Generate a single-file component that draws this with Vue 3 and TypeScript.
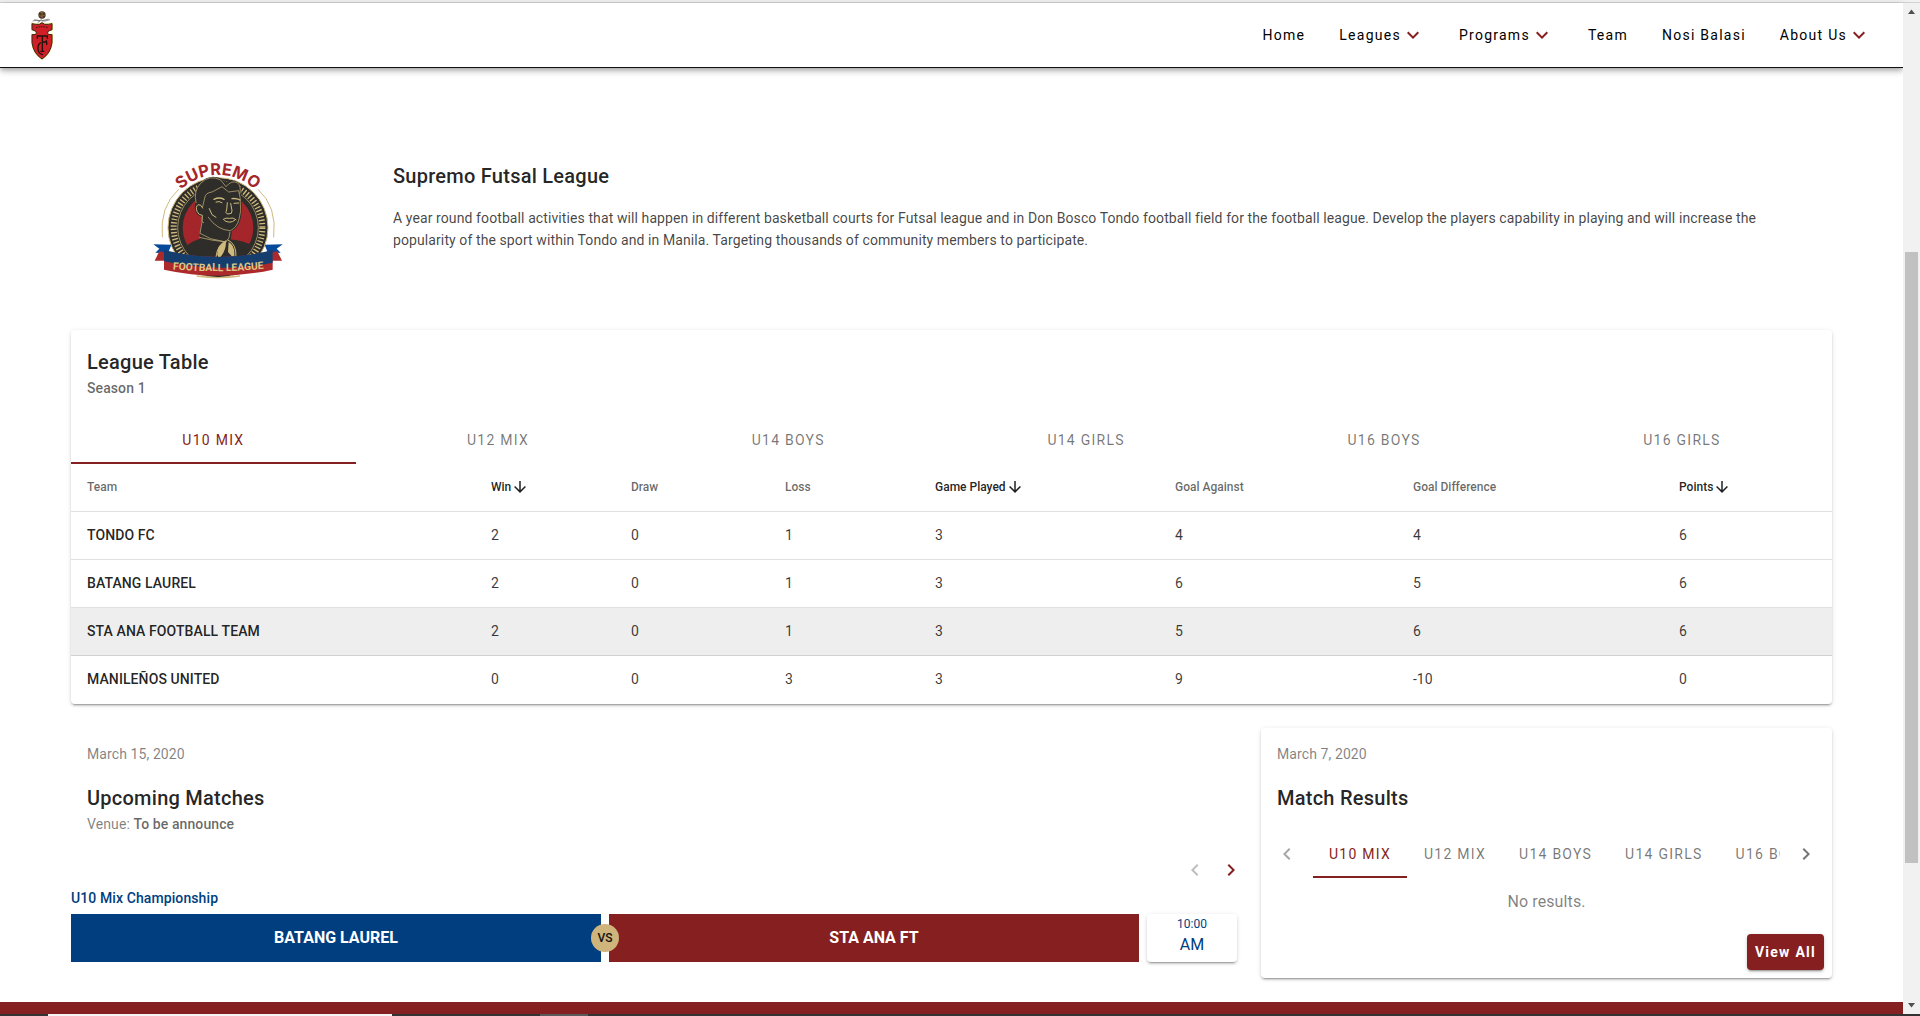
<script setup lang="ts">
import { ref } from 'vue'

interface NavItem {
  label: string
  menu: boolean
}

interface Column {
  key: keyof Standing
  label: string
  sorted: boolean
  share: number
}

interface Standing {
  team: string
  win: number
  draw: number
  loss: number
  played: number
  against: number
  difference: number
  points: number
}

const nav: NavItem[] = [
  { label: 'Home', menu: false },
  { label: 'Leagues', menu: true },
  { label: 'Programs', menu: true },
  { label: 'Team', menu: false },
  { label: 'Nosi Balasi', menu: false },
  { label: 'About Us', menu: true },
]

const divisions: string[] = ['U10 MIX', 'U12 MIX', 'U14 BOYS', 'U14 GIRLS', 'U16 BOYS', 'U16 GIRLS']

const columns: Column[] = [
  { key: 'team', label: 'Team', sorted: false, share: 404 },
  { key: 'win', label: 'Win', sorted: true, share: 140 },
  { key: 'draw', label: 'Draw', sorted: false, share: 154 },
  { key: 'loss', label: 'Loss', sorted: false, share: 150 },
  { key: 'played', label: 'Game Played', sorted: true, share: 240 },
  { key: 'against', label: 'Goal Against', sorted: false, share: 238 },
  { key: 'difference', label: 'Goal Difference', sorted: false, share: 266 },
  { key: 'points', label: 'Points', sorted: true, share: 169 },
]

const standings: Standing[] = [
  { team: 'TONDO FC', win: 2, draw: 0, loss: 1, played: 3, against: 4, difference: 4, points: 6 },
  { team: 'BATANG LAUREL', win: 2, draw: 0, loss: 1, played: 3, against: 6, difference: 5, points: 6 },
  { team: 'STA ANA FOOTBALL TEAM', win: 2, draw: 0, loss: 1, played: 3, against: 5, difference: 6, points: 6 },
  { team: 'MANILEÑOS UNITED', win: 0, draw: 0, loss: 3, played: 3, against: 9, difference: -10, points: 0 },
]

const tableTab = ref<number>(0)
const resultTab = ref<number>(0)
const activeRow = ref<number>(2)
</script>

<template>
  <div class="window">
    <div class="edge-top"></div>
    <div class="view">
      <div class="page">
        <header class="bar">
          <a href="#" class="brand" aria-label="Tondo FC">
            <svg width="24" height="50" viewBox="0 0 72 150">
              <circle cx="36" cy="15" r="11" fill="#4a3520" />
              <path d="M29 8q7-5 12 0M27 17q9 5 18-2M36 5v19" stroke="#a07c4b" stroke-width="2" fill="none" />
              <path d="M8 33q12-5 24-1t28-3M13 29l16 5M24 38l12-12M36 32l20-5" stroke="#555" stroke-width="2" fill="none" />
              <path d="M36 38l8 5q12 1 22-2v18q-15 3-14 11 3 5 14 4v24q-4 32-30 49Q10 130 6 98V74q11 1 14-4 1-8-14-11V41q10 3 22 2z" fill="#d01f27" stroke="#e9dc7a" stroke-width="5" />
              <path d="M36 38l8 5q12 1 22-2v18q-15 3-14 11 3 5 14 4v24q-4 32-30 49Q10 130 6 98V74q11 1 14-4 1-8-14-11V41q10 3 22 2z" fill="#d01f27" stroke="#3b2a16" stroke-width="3" />
              <path d="M18 53q18-6 36 0" stroke="#5a1414" stroke-width="4" stroke-dasharray="3 2" fill="none" />
              <path d="M22 86v-8h30v8M37 78v46M31 124h12M37 96h13v9M49 96v-5M33 98q-10 4-9 19t15 17" stroke="#25120d" stroke-width="4" fill="none" />
            </svg>
          </a>
          <nav class="nav" aria-label="Main">
            <a v-for="item in nav" :key="item.label" href="#" class="nav-link">
              {{ item.label }}
              <svg v-if="item.menu" class="chevron" width="24" height="24" viewBox="0 0 24 24">
                <path d="M7.41 8.58L12 13.17l4.59-4.59L18 10l-6 6-6-6z" />
              </svg>
            </a>
          </nav>
        </header>

        <main class="content">
          <section class="intro">
            <div class="crest">
              <svg width="144" height="124" viewBox="36 30 432 372" role="img" aria-label="Supremo Football League">
                <defs>
                  <path id="arc-top" d="M72 237a162 162 0 0 1 324 0" />
                  <path id="arc-ribbon" d="M84 357Q235 371 386 355" />
                  <clipPath id="disc"><circle cx="234" cy="233" r="108" /></clipPath>
                </defs>
                <path d="M116 118Q58 170 67 262M354 118Q412 170 401 262" stroke="#cfba7d" stroke-width="3" fill="none" />
                <circle cx="234" cy="233" r="150" fill="#2f2d2a" stroke="#cfba7d" stroke-width="3" />
                <circle cx="234" cy="233" r="133" fill="none" stroke="#cfba7d" stroke-width="18" stroke-dasharray="4 6" />
                <circle cx="234" cy="233" r="121" fill="none" stroke="#cfba7d" stroke-width="2" />
                <circle cx="234" cy="233" r="106" fill="#a4262a" />
                <path clip-path="url(#disc)" d="M110 345Q120 284 180 266l50 8 34-6q66 2 96 40v60H110z" fill="#2f2d2a" />
                <path d="M168 160q-8-36 14-60 26-28 62-12l12 12q20-14 38 0 12 14 7 34l3 46-4 26q-6 26-26 36l-4 28-34 16q-34-4-56-24l8-62q-18-4-21-24-2-10 1-16z" fill="#2f2d2a" stroke="#2f2d2a" stroke-width="4" />
                <g fill="none" stroke="#cfba7d" stroke-linecap="round" stroke-linejoin="round">
                  <path stroke-width="2" d="M168 158q-8-36 14-58 26-28 60-10l16 20q16-20 34-12 12 10 8 32" />
                  <path stroke-width="2" d="M188 170l6-26q2-16 22-18l30-16 20 16 30-4 4 20 2 40-5 26q-6 24-26 34-40-2-66-40" />
                  <path stroke-width="3" d="M188 174q-4-12-14-10-8 6-3 20 5 12 16 12l-1 18 4 4" />
                  <path stroke-width="4" d="M222 148q16-8 30 0M276 146q12-2 24 4" />
                  <path stroke-width="3" d="M228 156q10-4 18 2M282 160l14-1M262 158l-2 22q-6 10 4 12l10-2 2-8-4-22" />
                  <path stroke-width="3" d="M250 208q8-6 18-3 12-4 20 4M254 212q16 10 30-1M208 176l8 18 12 8" />
                  <path stroke-width="2" d="M186 216l-6 34 32 16 46 10q12-10 12-30M178 262q36 10 80 14" />
                  <path stroke-width="3" d="M258 272q-26 12-30 48M264 270q26 12 24 50" />
                </g>
                <path d="M232 316q-2-32 26-42 0 32-20 50zM266 276q22 12 16 50l-18-20z" fill="#cfba7d" />
                <path d="M40 283l54 1-10 26-38-2 12-12zM428 283l-54 1 10 26 38-2-12-12z" fill="#06489a" />
                <path d="M58 304l28 6v22H44zM412 304l-28 6v22h42z" fill="#ad2a2c" />
                <path d="M72 302Q235 340 398 302v57Q235 395 72 359z" fill="#ad2a2c" />
                <path d="M72 300Q235 342 398 300v38Q235 370 72 334z" fill="#153e6e" />
                <path d="M170 378q64 10 130 0" stroke="#cfba7d" stroke-width="4" fill="none" />
                <text class="crest-top"><textPath href="#arc-top" startOffset="50%" text-anchor="middle">SUPREMO</textPath></text>
                <text class="crest-ribbon"><textPath href="#arc-ribbon" startOffset="50%" text-anchor="middle">FOOTBALL LEAGUE</textPath></text>
              </svg>
            </div>
            <div class="intro-text">
              <h1 class="title">Supremo Futsal League</h1>
              <p class="lead">
                A year round football activities that will happen in different basketball courts for Futsal league and in Don Bosco Tondo football field for the football league. Develop the players capability in playing and will increase the popularity of the sport within Tondo and in Manila. Targeting thousands of community members to participate.
              </p>
            </div>
          </section>

          <section class="card">
            <div class="card-head">
              <h2 class="title">League Table</h2>
              <p class="subtitle strong">Season 1</p>
            </div>
            <div class="tabs" role="tablist">
              <button
                v-for="(name, i) in divisions"
                :key="name"
                type="button"
                role="tab"
                class="tab grow"
                :class="{ active: tableTab === i }"
                @click="tableTab = i"
              >{{ name }}</button>
            </div>
            <table class="standings">
              <colgroup>
                <col v-for="col in columns" :key="col.key" :style="{ width: col.share + 'px' }" />
              </colgroup>
              <thead>
                <tr>
                  <th v-for="col in columns" :key="col.key" scope="col" :class="{ sorted: col.sorted }">
                    <span class="th-inner">{{ col.label }}<svg v-if="col.sorted" width="18" height="18" viewBox="0 0 24 24"><path d="M11 4h2v12l5.5-5.5 1.42 1.42L12 19.84l-7.92-7.92L5.5 10.5 11 16z" /></svg></span>
                  </th>
                </tr>
              </thead>
              <tbody>
                <tr v-for="(row, r) in standings" :key="row.team" :class="{ hovered: activeRow === r }">
                  <td v-for="col in columns" :key="col.key">{{ row[col.key] }}</td>
                </tr>
              </tbody>
            </table>
          </section>

          <div class="columns">
            <section class="upcoming">
              <p class="date">March 15, 2020</p>
              <div class="card-head">
                <h2 class="title">Upcoming Matches</h2>
                <p class="subtitle">Venue: <strong>To be announce</strong></p>
              </div>
              <div class="pager">
                <button type="button" aria-label="Previous matches" disabled>
                  <svg width="12" height="24" viewBox="6 0 12 24"><path d="M15.41 16.58L10.83 12l4.58-4.59L14 6l-6 6 6 6z" /></svg>
                </button>
                <button type="button" aria-label="Next matches">
                  <svg width="12" height="24" viewBox="6 0 12 24"><path d="M8.59 16.58L13.17 12 8.59 7.41 10 6l6 6-6 6z" /></svg>
                </button>
              </div>
              <h3 class="stage">U10 Mix Championship</h3>
              <div class="match">
                <div class="side home">BATANG LAUREL<span class="versus">VS</span></div>
                <div class="side away">STA ANA FT</div>
                <div class="time"><span class="clock">10:00</span><span class="half">AM</span></div>
              </div>
            </section>

            <section class="card results">
              <p class="date">March 7, 2020</p>
              <div class="card-head">
                <h2 class="title">Match Results</h2>
              </div>
              <div class="slider">
                <button type="button" class="slide prev" aria-label="Previous tabs" disabled>
                  <svg width="24" height="24" viewBox="0 0 24 24"><path d="M15.41 16.58L10.83 12l4.58-4.59L14 6l-6 6 6 6z" /></svg>
                </button>
                <div class="tabs clipped" role="tablist">
                  <button
                    v-for="(name, i) in divisions"
                    :key="name"
                    type="button"
                    role="tab"
                    class="tab"
                    :class="{ active: resultTab === i }"
                    @click="resultTab = i"
                  >{{ name }}</button>
                </div>
                <button type="button" class="slide" aria-label="Next tabs">
                  <svg width="24" height="24" viewBox="0 0 24 24"><path d="M8.59 16.58L13.17 12 8.59 7.41 10 6l6 6-6 6z" /></svg>
                </button>
              </div>
              <p class="empty">No results.</p>
              <div class="actions"><button type="button" class="view-all">View All</button></div>
            </section>
          </div>
        </main>
        <footer class="footer"></footer>
      </div>

      <div class="scrollbar" aria-hidden="true">
        <svg width="17" height="17" viewBox="0 0 17 17"><path d="M5 11h7L8.500 6.500z" /></svg>
        <div class="track"><div class="thumb"></div></div>
        <svg width="17" height="17" viewBox="0 0 17 17"><path d="M5 6h7l-3.500 4.500z" /></svg>
      </div>
    </div>
    <div class="edge-bottom"><i class="gap"></i><i class="search"></i><i class="space"></i><i class="task"></i></div>
  </div>
</template>

<style>
body {
  margin: 0;
  background: #fff;
}
</style>

<style scoped>
* {
  box-sizing: border-box;
}

.window {
  display: flex;
  flex-direction: column;
  min-height: 100vh;
  font-family: Roboto, "Liberation Sans", sans-serif;
  font-size: 14px;
  line-height: 22px;
  color: rgba(0, 0, 0, 0.87);
}

.edge-top {
  height: 3px;
  background: #f1f1f1;
  border-bottom: 1px solid #d2d2d2;
}

.view {
  display: flex;
  flex: 1;
}

.page {
  flex: 1;
  min-width: 0;
  display: flex;
  flex-direction: column;
}

h1,
h2,
h3,
p {
  margin: 0;
}

button {
  font: inherit;
  border: 0;
  padding: 0;
  background: none;
  cursor: pointer;
}

svg {
  display: block;
  fill: currentColor;
}

.bar {
  display: flex;
  align-items: center;
  justify-content: space-between;
  height: 65px;
  padding: 0 32px 0 30px;
  border-bottom: 1px solid #111;
  box-shadow: 0 2px 4px -1px rgba(0, 0, 0, 0.2), 0 4px 5px 0 rgba(0, 0, 0, 0.14), 0 1px 10px 0 rgba(0, 0, 0, 0.12);
}

.nav {
  display: flex;
  gap: 34px;
}

.nav-link {
  display: flex;
  align-items: center;
  color: #000;
  text-decoration: none;
  letter-spacing: 0.09em;
  white-space: nowrap;
}

.chevron {
  color: #861f20;
}

.content {
  flex: 1;
  padding: 76px 71px 24px;
}

.intro {
  display: flex;
  margin-bottom: 46px;
}

.crest {
  width: 306px;
  padding-top: 16px;
  display: flex;
  justify-content: center;
  flex: none;
}

.crest-top {
  font: 700 49px Inter, sans-serif;
  fill: #a4262a;
}

.crest-ribbon {
  font: 700 31px Roboto, sans-serif;
  fill: #dcc783;
}

.intro-text {
  flex: 1;
  padding: 16px 28px 0 16px;
}

.title {
  font-size: 20px;
  line-height: 32px;
  font-weight: 500;
  letter-spacing: 0.0125em;
}

.lead {
  margin-top: 15px;
  letter-spacing: 0.007em;
  color: rgba(0, 0, 0, 0.74);
}

.card {
  background: #fff;
  border-radius: 4px;
  box-shadow: 0 3px 1px -2px rgba(0, 0, 0, 0.2), 0 2px 2px 0 rgba(0, 0, 0, 0.14), 0 1px 5px 0 rgba(0, 0, 0, 0.12);
}

.card-head {
  padding: 16px;
}

.subtitle {
  line-height: 20px;
  padding-bottom: 2px;
  letter-spacing: 0.007em;
  color: rgba(0, 0, 0, 0.5);
}

.subtitle strong,
.subtitle.strong {
  font-weight: 500;
  color: rgba(0, 0, 0, 0.6);
}

.tabs {
  display: flex;
}

.tab {
  height: 48px;
  padding: 0 16px;
  min-width: 90px;
  flex: none;
  color: rgba(0, 0, 0, 0.54);
  letter-spacing: 0.09em;
  white-space: nowrap;
  border-top: 2px solid transparent;
  border-bottom: 2px solid transparent;
}

.tab.grow {
  flex: 1 1 auto;
}

.tab.active {
  color: #861f20;
  border-bottom-color: #861f20;
}

.standings {
  width: 100%;
  table-layout: fixed;
  border-spacing: 0;
  line-height: 20px;
}

.standings th,
.standings td {
  height: 48px;
  padding: 0 16px 1px;
  text-align: left;
  border-bottom: 1px solid rgba(0, 0, 0, 0.12);
}

.standings th {
  font-size: 12px;
  font-weight: 500;
  color: rgba(0, 0, 0, 0.6);
  white-space: nowrap;
}

.standings th.sorted {
  color: rgba(0, 0, 0, 0.87);
}

.th-inner {
  display: inline-flex;
  align-items: center;
}

.standings td {
  color: rgba(0, 0, 0, 0.78);
}

.standings td:first-child {
  font-weight: 500;
  letter-spacing: 0.007em;
  color: rgba(0, 0, 0, 0.87);
}

.standings tbody tr:last-child td {
  border-bottom-color: transparent;
}

.hovered {
  background: #eee;
}

.columns {
  display: grid;
  grid-template-columns: repeat(12, 1fr);
  column-gap: 24px;
  margin-top: 24px;
}

.upcoming {
  grid-column: span 8;
  min-width: 0;
}

.results {
  grid-column: span 4;
  min-width: 0;
}

.date {
  padding: 16px 16px 2px;
  line-height: 20px;
  letter-spacing: 0.007em;
  color: rgba(0, 0, 0, 0.5);
}

.upcoming .card-head {
  padding-bottom: 6px;
}

.pager {
  display: flex;
  justify-content: flex-end;
  gap: 24px;
  padding: 16px 0 5px;
}

.pager button {
  color: #861f20;
}

.pager button:disabled {
  color: rgba(0, 0, 0, 0.26);
}

.stage {
  font-size: 14px;
  line-height: 22px;
  font-weight: 500;
  letter-spacing: 0.007em;
  color: #003e80;
  margin-bottom: 5px;
}

.match {
  display: flex;
  gap: 8px;
}

.side {
  position: relative;
  flex: 1;
  height: 48px;
  display: flex;
  align-items: center;
  justify-content: center;
  font-size: 16px;
  font-weight: 700;
  color: #fff;
}

.home {
  background: #003e80;
}

.away {
  background: #861f20;
}

.versus {
  position: absolute;
  right: -18px;
  top: 10px;
  z-index: 1;
  width: 28px;
  height: 28px;
  border-radius: 50%;
  background: #cfb57b;
  color: #111;
  font-size: 12px;
  font-weight: 500;
  line-height: 28px;
  text-align: center;
}

.time {
  width: 90px;
  display: flex;
  flex-direction: column;
  align-items: center;
  border-radius: 4px;
  color: #003e80;
  box-shadow: 0 3px 1px -2px rgba(0, 0, 0, 0.2), 0 2px 2px 0 rgba(0, 0, 0, 0.14), 0 1px 5px 0 rgba(0, 0, 0, 0.12);
}

.clock {
  font-size: 12px;
  line-height: 20px;
}

.half {
  font-size: 16px;
  line-height: 22px;
}

.slider {
  display: flex;
}

.clipped {
  flex: 1;
  gap: 1px;
  overflow: hidden;
}

.slide {
  width: 52px;
  flex: none;
  display: flex;
  align-items: center;
  justify-content: center;
  color: rgba(0, 0, 0, 0.54);
}

.slide:disabled {
  color: rgba(0, 0, 0, 0.35);
}

.empty {
  font-size: 16px;
  line-height: 48px;
  text-align: center;
  letter-spacing: 0.007em;
  color: rgba(0, 0, 0, 0.5);
}

.actions {
  display: flex;
  justify-content: flex-end;
  padding: 8px;
}

.view-all {
  height: 36px;
  padding: 0 8px;
  border-radius: 4px;
  background: #861f20;
  color: #fff;
  font-weight: 700;
  letter-spacing: 0.09em;
  box-shadow: 0 3px 1px -2px rgba(0, 0, 0, 0.2), 0 2px 2px 0 rgba(0, 0, 0, 0.14), 0 1px 5px 0 rgba(0, 0, 0, 0.12);
}

.footer {
  height: 12px;
  background: #861f20;
}

.scrollbar {
  width: 17px;
  flex: none;
  display: flex;
  flex-direction: column;
  background: #f1f1f1;
  color: #505050;
}

.track {
  flex: 1;
  display: flex;
  flex-direction: column;
  padding: 0 2px;
}

.track::before {
  content: "";
  flex: 232;
}

.track::after {
  content: "";
  flex: 134;
}

.thumb {
  flex: 611;
  background: #c1c1c1;
}

.edge-bottom {
  display: flex;
  height: 2px;
  background: #333;
}

.gap {
  width: 48px;
}

.search {
  width: 344px;
  background: #f3f3f3;
}

.space {
  width: 148px;
}

.task {
  width: 48px;
  background: #5a5a5a;
}
</style>
